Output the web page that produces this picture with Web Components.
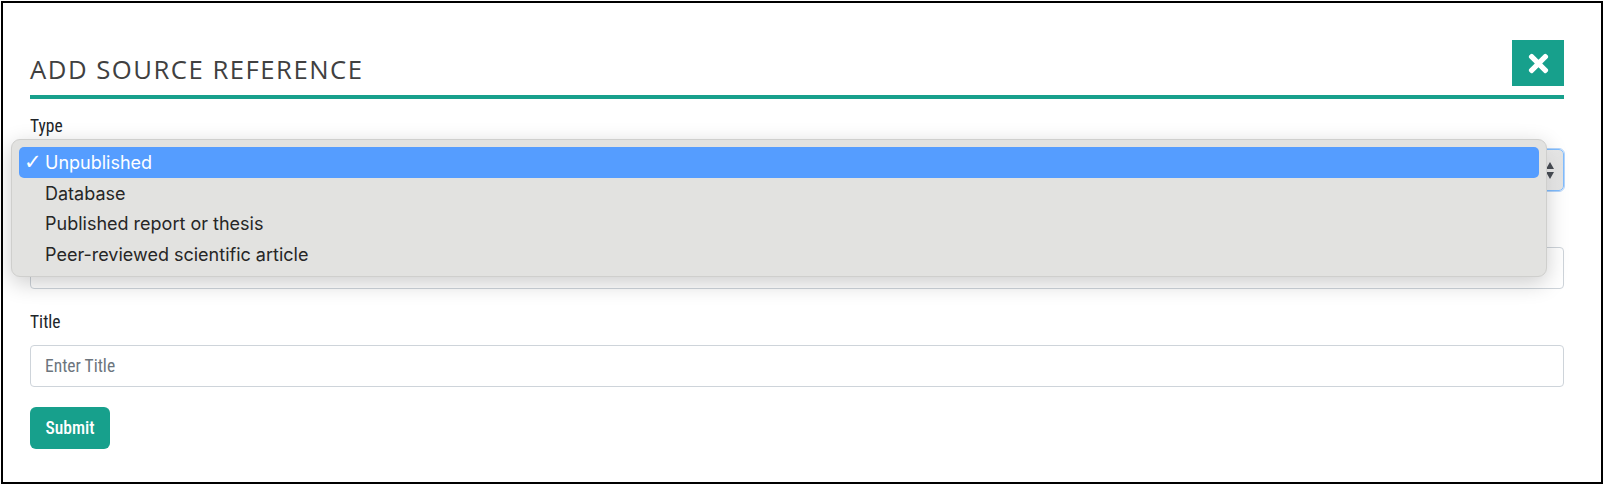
<!DOCTYPE html>
<html lang="en">
<head>
<meta charset="utf-8">
<title>Add source reference</title>
<style>
  html, body { margin: 0; background: #fff; }
  body { padding: 1px; font-family: Roboto, "Liberation Sans", sans-serif; }
</style>
</head>
<body>
<source-dialog heading="Add source reference">
  <form-field label="Type">
    <select-box></select-box>
    <popup-menu></popup-menu>
  </form-field>
  <form-field>
    <text-box></text-box>
  </form-field>
  <form-field label="Title">
    <text-box placeholder="Enter Title"></text-box>
  </form-field>
  <submit-button>Submit</submit-button>
</source-dialog>

<script>
class SourceDialog extends HTMLElement {
  constructor() {
    super();
    this.attachShadow({ mode: 'open' });
    this.shadowRoot.innerHTML = `
      <style>
        :host {
          display: block;
          box-sizing: border-box;
          width: 1602px;
          height: 483px;
          border: 2px solid #000;
          padding: 36px 37px 0 27px;
        }
        header {
          display: flex;
          justify-content: space-between;
          align-items: flex-start;
          height: 56px;
          border-bottom: 4px solid #17a08c;
          margin-bottom: 15px;
        }
        h1 {
          margin: 15px 0 0;
          font: 400 25.7px/32px "Open Sans", sans-serif;
          letter-spacing: 1.5px;
          text-transform: uppercase;
          color: #404040;
        }
        button {
          width: 52px;
          height: 46px;
          margin: 1px 0 0;
          padding: 0;
          border: 0;
          background: #17a08c;
          display: flex;
          align-items: center;
          justify-content: center;
        }
        svg { width: 15px; height: 21px; fill: #fff; transform: scale(1.35); }
      </style>
      <header>
        <h1></h1>
        <button aria-label="Close">
          <svg viewBox="0 0 352 512"><path d="M242.72 256l100.07-100.07c12.28-12.28 12.28-32.19 0-44.48l-22.24-22.24c-12.28-12.28-32.19-12.28-44.48 0L176 189.28 75.93 89.21c-12.28-12.28-32.19-12.28-44.48 0L9.21 111.45c-12.28 12.28-12.28 32.19 0 44.48L109.28 256 9.21 356.07c-12.28 12.28-12.28 32.19 0 44.48l22.24 22.24c12.28 12.28 32.2 12.28 44.48 0L176 322.72l100.07 100.07c12.28 12.28 32.2 12.28 44.48 0l22.24-22.24c12.28-12.28 12.28-32.19 0-44.48L242.72 256z"/></svg>
        </button>
      </header>
      <slot></slot>
    `;
    this.shadowRoot.querySelector('h1').textContent = this.getAttribute('heading');
  }
}
customElements.define('source-dialog', SourceDialog);

class FormField extends HTMLElement {
  constructor() {
    super();
    this.attachShadow({ mode: 'open' });
    this.shadowRoot.innerHTML = `
      <style>
        :host {
          display: block;
          position: relative;
          margin-bottom: 21px;
        }
        label {
          display: block;
          height: 24px;
          margin-bottom: 11px;
          font: 400 17.5px/24px Roboto, sans-serif;
          font-stretch: 80%;
          color: #212529;
        }
      </style>
      <label></label>
      <slot></slot>
    `;
    this.shadowRoot.querySelector('label').textContent = this.getAttribute('label') || '';
  }
}
customElements.define('form-field', FormField);

class TextBox extends HTMLElement {
  constructor() {
    super();
    this.attachShadow({ mode: 'open' });
    this.shadowRoot.innerHTML = `
      <style>
        :host {
          display: block;
          box-sizing: border-box;
          height: 42px;
          padding: 0 14px;
          border: 1px solid #ced4da;
          border-radius: 4px;
          background: #fff;
          font: 400 17.5px/40px Roboto, sans-serif;
          font-stretch: 80%;
          color: #6c757d;
        }
      </style>
      <span></span>
    `;
    this.shadowRoot.querySelector('span').textContent = this.getAttribute('placeholder') || '';
  }
}
customElements.define('text-box', TextBox);

class SelectBox extends HTMLElement {
  constructor() {
    super();
    this.attachShadow({ mode: 'open' });
    this.shadowRoot.innerHTML = `
      <style>
        :host {
          display: flex;
          justify-content: flex-end;
          align-items: center;
          box-sizing: border-box;
          height: 42px;
          padding-right: 8px;
          border: 1px solid #80bdff;
          border-radius: 5px;
          outline: 1px solid #b5d5fb;
          background: linear-gradient(to right, #fff, #fff 97%, #f0f0f0 99%, #e4e4e4);
        }
        svg { width: 10px; height: 17px; fill: #4a4f57; }
      </style>
      <svg viewBox="0 0 10 17"><path d="M5 0 9 7H1zM1 10h8l-4 7z"/></svg>
    `;
  }
}
customElements.define('select-box', SelectBox);

class PopupMenu extends HTMLElement {
  constructor() {
    super();
    this.attachShadow({ mode: 'open' });
    this.shadowRoot.innerHTML = `
      <style>
        /* native menu sits over the fields below it */
        :host {
          position: absolute;
          z-index: 5;
          left: -19px;
          top: 25px;
          width: 1536px;
          height: 138px;
          box-sizing: border-box;
          padding: 7px 7px 0;
          border: 1px solid #cfcfcd;
          border-radius: 9px;
          background: #e2e2e0;
          box-shadow: 0 6px 22px rgba(0, 0, 0, .2);
          font: 400 18px/32px Inter, sans-serif;
          color: #262626;
        }
        div {
          display: flex;
          height: 30.6px;
          padding-left: 26px;
          border-radius: 5px;
          position: relative;
        }
        .on { background: #559dff; color: #fff; }
        .on::before {
          content: "\\2713";
          position: absolute;
          left: 5px;
          font: 700 21px/30px "DejaVu Sans", sans-serif;
        }
      </style>
      <div class="on">Unpublished</div>
      <div>Database</div>
      <div>Published report or thesis</div>
      <div>Peer-reviewed scientific article</div>
    `;
  }
}
customElements.define('popup-menu', PopupMenu);

class SubmitButton extends HTMLElement {
  constructor() {
    super();
    this.attachShadow({ mode: 'open' });
    this.shadowRoot.innerHTML = `
      <style>
        :host {
          display: inline-block;
          box-sizing: border-box;
          height: 42px;
          padding: 0 15.5px;
          margin-top: -1px;
          border-radius: 6px;
          background: #17a08c;
          color: #fff;
          font: 500 17.5px/42px Roboto, sans-serif;
          font-stretch: 86%;
        }
      </style>
      <slot></slot>
    `;
  }
}
customElements.define('submit-button', SubmitButton);
</script>
</body>
</html>
